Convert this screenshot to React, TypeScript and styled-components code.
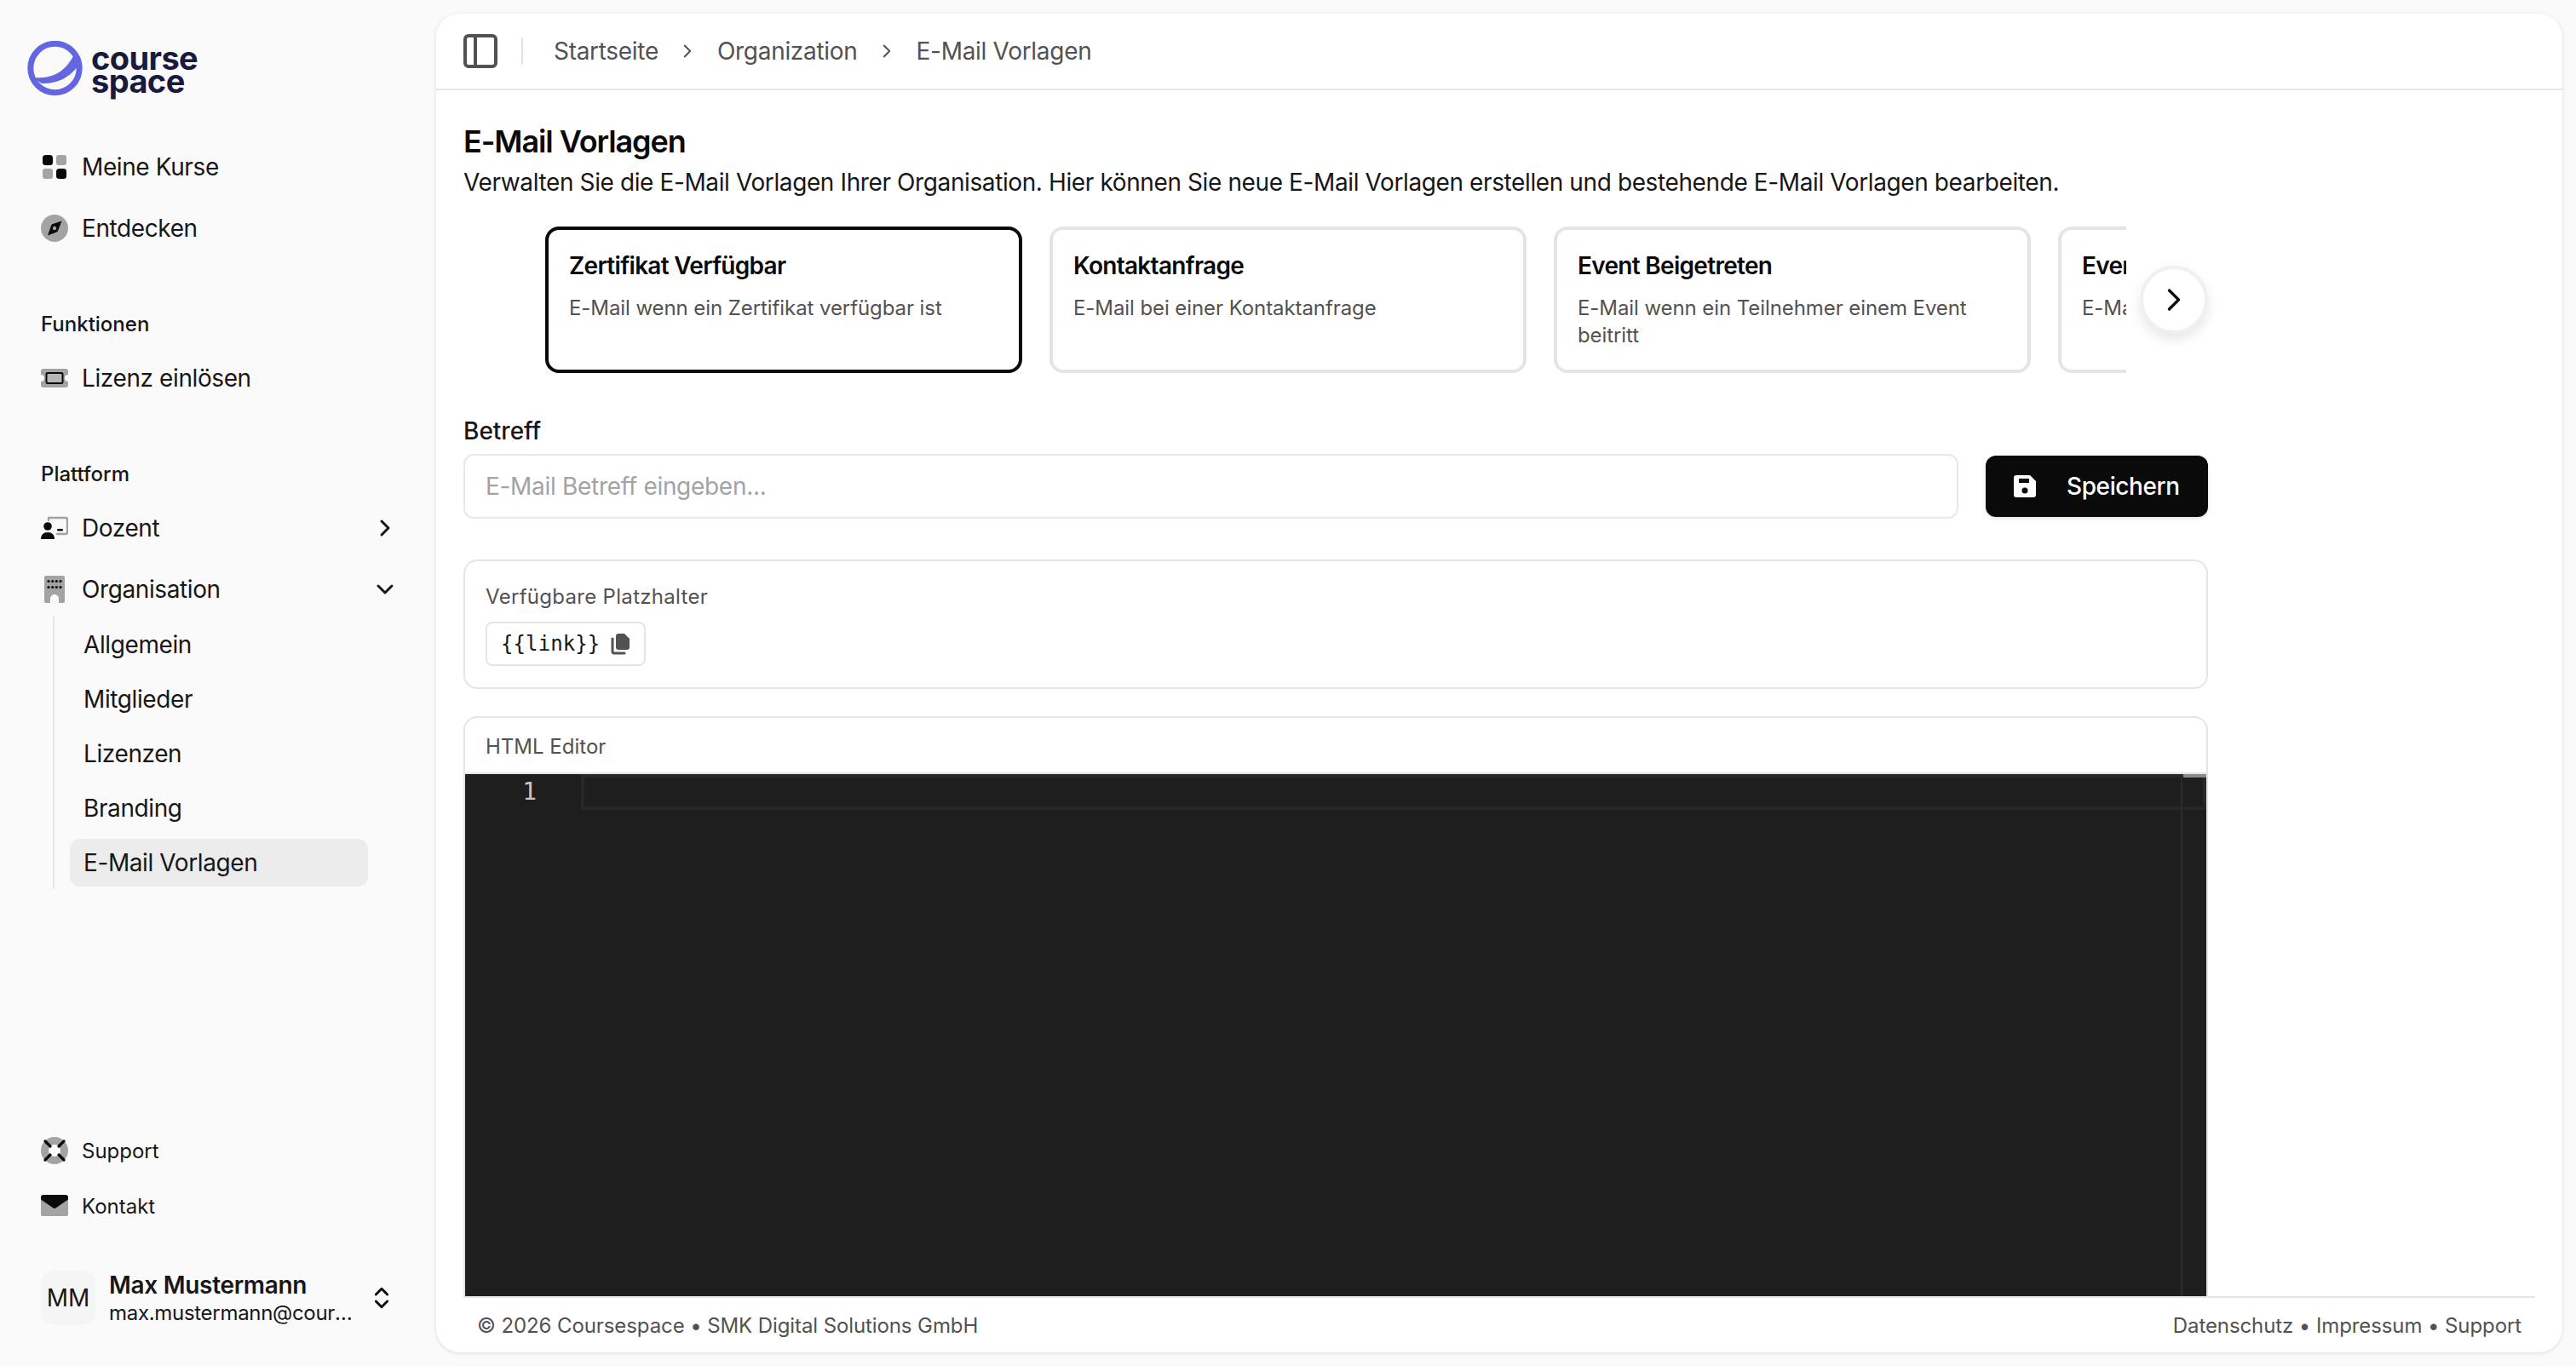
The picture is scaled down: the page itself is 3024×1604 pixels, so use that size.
import React from "react";
import styled, { createGlobalStyle } from "styled-components";
import { ChevronDown, ChevronRight, ChevronsUpDown, PanelLeft } from "lucide-react";

const Global = createGlobalStyle`
  * { box-sizing: border-box; }
  html, body { margin: 0; padding: 0; height: 100%; }
  body { background: #fafafa; color: #0a0a0a; font-family: Inter, "Liberation Sans", sans-serif; overflow: hidden; }
  #root { height: 100%; }
`;

const Shell = styled.div`
  display: flex;
  height: 100vh;
`;

const Sidebar = styled.aside`
  width: 512px;
  flex: none;
  display: flex;
  flex-direction: column;
  padding: 48px 32px 48px;
`;

const Brand = styled.div`
  display: flex;
  align-items: center;
  gap: 9px;
  height: 66px;
  margin-bottom: 50px;
`;

const BrandWord = styled.div`
  font-family: Inter, sans-serif;
  font-weight: 700;
  font-size: 38px;
  line-height: 27px;
  letter-spacing: -0.6px;
  color: #1a1a3d;
  padding-top: 2px;
`;

const Group = styled.nav`
  display: flex;
  flex-direction: column;
  gap: 8px;
  margin-bottom: 64px;
`;

const GroupLabel = styled.div`
  height: 32px;
  line-height: 34px;
  padding-left: 16px;
  margin-bottom: 8px;
  font-size: 24px;
  font-weight: 500;
  color: #171717;
`;

const NavItem = styled.div<{ $small?: boolean }>`
  display: flex;
  align-items: center;
  gap: 16px;
  height: ${(p) => (p.$small ? "56px" : "64px")};
  padding: 0 16px;
  font-size: ${(p) => (p.$small ? "24px" : "28px")};
  letter-spacing: ${(p) => (p.$small ? "0" : "-0.4px")};
  color: #171717;
  svg.tail { margin-left: auto; margin-right: -4px; }
`;

const IconSlot = styled.svg`
  width: 32px;
  height: 32px;
  flex: none;
`;

const SubList = styled.div`
  margin: -8px 0 0 30px;
  padding: 5px 0 3px 18px;
  border-left: 2px solid #e5e5e5;
  display: flex;
  flex-direction: column;
  gap: 8px;
`;

const SubItem = styled.div<{ $active?: boolean }>`
  width: 350px;
  height: 56px;
  line-height: 56px;
  padding-left: 16px;
  font-size: 28px;
  letter-spacing: -0.4px;
  color: #171717;
  border-radius: 12px;
  background: ${(p) => (p.$active ? "#ececec" : "transparent")};
`;

const SidebarBottom = styled.div`
  margin-top: auto;
  display: flex;
  flex-direction: column;
  gap: 9px;
`;

const UserRow = styled.div`
  display: flex;
  align-items: center;
  gap: 16px;
  margin: 39px 0 0 16px;
  height: 64px;
`;

const Avatar = styled.div`
  width: 64px;
  height: 64px;
  flex: none;
  border-radius: 16px;
  background: #f5f5f5;
  display: flex;
  align-items: center;
  justify-content: center;
  font-size: 28px;
  color: #171717;
`;

const UserText = styled.div`
  width: 288px;
  min-width: 0;
  padding-top: 2px;
`;

const UserName = styled.div`
  font-size: 28px;
  font-weight: 600;
  line-height: 34px;
  letter-spacing: -0.3px;
  color: #171717;
  white-space: nowrap;
`;

const UserMail = styled.div`
  font-size: 24px;
  line-height: 32px;
  letter-spacing: -0.3px;
  color: #171717;
  white-space: nowrap;
  overflow: hidden;
  text-overflow: ellipsis;
`;

const Panel = styled.main`
  flex: 1;
  min-width: 0;
  margin: 16px 16px 16px 0;
  background: #fff;
  border-radius: 28px;
  box-shadow: 0 1px 5px rgba(0, 0, 0, 0.12);
  display: flex;
  flex-direction: column;
  overflow: hidden;
`;

const Header = styled.header`
  height: 90px;
  flex: none;
  display: flex;
  align-items: center;
  padding-left: 28px;
  border-bottom: 2px solid #e5e5e5;
  svg { flex: none; }
`;

const HeaderDivider = styled.div`
  width: 2px;
  height: 32px;
  background: #e5e5e5;
  margin: 0 36px 0 24px;
`;

const Crumb = styled.span`
  font-size: 28px;
  letter-spacing: -0.3px;
  color: #525252;
`;

const CrumbSep = styled.span`
  display: flex;
  margin: 0 21.5px;
  color: #525252;
`;

const Content = styled.div`
  flex: 1;
  min-height: 0;
  overflow: hidden;
  padding: 40px 32px 0;
  width: 2112px;
`;

const Title = styled.h1`
  margin: 0;
  font-size: 36px;
  line-height: 40px;
  font-weight: 600;
  letter-spacing: -1.1px;
  color: #0a0a0a;
`;

const Description = styled.p`
  margin: 8px 0 32px;
  font-size: 28px;
  line-height: 40px;
  letter-spacing: -0.39px;
  color: #171717;
  white-space: nowrap;
`;

const Carousel = styled.div`
  position: relative;
  padding: 0 96px;
`;

const Track = styled.div`
  display: flex;
  gap: 32px;
  overflow: hidden;
`;

const TemplateCard = styled.div<{ $selected?: boolean }>`
  flex: none;
  width: 560px;
  height: 172px;
  padding: 24px;
  border: 4px solid ${(p) => (p.$selected ? "#0a0a0a" : "#e5e5e5")};
  border-radius: 16px;
  background: #fff;
`;

const CardTitle = styled.div`
  font-size: 28px;
  line-height: 36px;
  font-weight: 600;
  letter-spacing: -0.7px;
  color: #0a0a0a;
  white-space: nowrap;
`;

const CardText = styled.div`
  margin-top: 16px;
  font-size: 24px;
  line-height: 32px;
  letter-spacing: -0.08px;
  color: #525252;
`;

const NextButton = styled.button`
  position: absolute;
  right: 0;
  top: 46px;
  width: 80px;
  height: 80px;
  border-radius: 50%;
  border: 4px solid #f0f0f0;
  background: #fff;
  box-shadow: 0 6px 14px rgba(0, 0, 0, 0.1);
  display: flex;
  align-items: center;
  justify-content: center;
  padding: 0;
  color: #0a0a0a;
`;

const FieldLabel = styled.div`
  margin-top: 48px;
  font-size: 28px;
  line-height: 40px;
  font-weight: 500;
  color: #171717;
`;

const SubjectRow = styled.div`
  margin-top: 7px;
  display: flex;
  align-items: center;
  gap: 32px;
`;

const SubjectInput = styled.input`
  flex: 1;
  min-width: 0;
  height: 76px;
  padding: 0 24px;
  border: 2px solid #e8e8e8;
  border-radius: 12px;
  background: #fff;
  font: 400 28px Inter, sans-serif;
  letter-spacing: -0.3px;
  color: #171717;
  outline: none;
  &::placeholder { color: #a3a3a3; opacity: 1; }
`;

const SaveButton = styled.button`
  flex: none;
  width: 261px;
  height: 72px;
  border: 0;
  border-radius: 12px;
  background: #0a0a0a;
  color: #fff;
  display: flex;
  align-items: center;
  gap: 34px;
  padding: 0 0 0 31px;
  font: 500 28px Inter, sans-serif;
  letter-spacing: -0.4px;
  box-shadow: 0 2px 4px rgba(0, 0, 0, 0.12);
`;

const PlaceholderBox = styled.section`
  margin-top: 48px;
  height: 152px;
  padding: 26px 24px 0;
  border: 2px solid #e5e5e5;
  border-radius: 16px;
`;

const SmallHeading = styled.div`
  font-size: 24px;
  line-height: 32px;
  letter-spacing: 0.3px;
  color: #525252;
`;

const Chip = styled.div`
  display: inline-flex;
  align-items: center;
  gap: 12px;
  height: 52px;
  margin-top: 13px;
  padding: 0 16px;
  border: 2px solid #e5e5e5;
  border-radius: 8px;
  font-family: "DejaVu Sans Mono", monospace;
  font-size: 24px;
  letter-spacing: 0.1px;
  color: #171717;
`;

const EditorCard = styled.section`
  margin-top: 32px;
  height: 1000px;
  border: 2px solid #e5e5e5;
  border-bottom: 0;
  border-radius: 16px 16px 0 0;
  overflow: hidden;
  display: flex;
  flex-direction: column;
`;

const EditorHeading = styled.div`
  flex: none;
  height: 66px;
  padding: 18px 24px 0;
  border-bottom: 2px solid #e5e5e5;
  font-size: 24px;
  line-height: 32px;
  color: #525252;
`;

const EditorBody = styled.div`
  position: relative;
  flex: 1;
  background: #1e1e1e;
  display: flex;
  align-items: flex-start;
`;

const LineNumber = styled.div`
  width: 136px;
  flex: none;
  height: 42px;
  padding-right: 52px;
  text-align: right;
  font-family: "DejaVu Sans Mono", monospace;
  font-size: 28px;
  line-height: 42px;
  color: #c6c6c6;
`;

const CurrentLine = styled.div`
  flex: 1;
  height: 42px;
  border: 4px solid #282828;
`;

const Ruler = styled.div`
  position: absolute;
  top: 0;
  bottom: 0;
  right: 28px;
  width: 2px;
  background: #2b2b2b;
`;

const RulerCursor = styled.div`
  position: absolute;
  top: 0;
  right: 0;
  width: 27px;
  height: 4px;
  background: #8a8a8a;
`;

const Footer = styled.footer`
  flex: none;
  height: 66px;
  margin: 0 32px;
  padding: 0 16px;
  border-top: 2px solid #e5e5e5;
  display: flex;
  align-items: center;
  justify-content: space-between;
  font-size: 24px;
  letter-spacing: -0.1px;
  color: #525252;
  background: #fff;
`;

const gray = "#a3a3a3";
const dark = "#0a0a0a";

const Logo = () => (
  <svg width="66" height="66" viewBox="0 0 66 66" fill="none">
    <circle cx="32.5" cy="32" r="28.7" stroke="#6366e0" strokeWidth="7" />
    <path d="M6 43C20 44 42 44 56 14L60 29C50 42 38 50 17 50Z" fill="#6366e0" />
  </svg>
);

const GridIcon = () => (
  <IconSlot viewBox="0 0 32 32">
    <rect x="2" y="2" width="12" height="12" rx="3.5" fill={dark} />
    <rect x="18" y="2" width="12" height="12" rx="3" fill={gray} />
    <rect x="2" y="18" width="12" height="12" rx="3" fill={gray} />
    <rect x="18" y="18" width="12" height="12" rx="3.5" fill={dark} />
  </IconSlot>
);

const CompassIcon = () => (
  <IconSlot viewBox="0 0 32 32">
    <circle cx="16" cy="16" r="16" fill={gray} />
    <path d="M24.5 7.5L20 19C19.4 20 19 20.4 18 20.8L8 24.5L12 13C12.4 12 13 11.4 14 11Z" fill={dark} />
    <circle cx="16" cy="16" r="2.2" fill={gray} />
  </IconSlot>
);

const TicketIcon = () => (
  <IconSlot viewBox="0 0 32 32">
    <path d="M3 5H29A3 3 0 0 1 32 8V12A4 4 0 0 0 32 20V24A3 3 0 0 1 29 27H3A3 3 0 0 1 0 24V20A4 4 0 0 0 0 12V8A3 3 0 0 1 3 5Z" fill={gray} />
    <rect x="6.5" y="10" width="19" height="12" rx="1.5" fill="#b5b5b5" stroke={dark} strokeWidth="2" />
  </IconSlot>
);

const TeacherIcon = () => (
  <IconSlot viewBox="0 0 32 32">
    <path d="M9 4H29A2 2 0 0 1 31 6V21A2 2 0 0 1 29 23H19" fill="none" stroke={gray} strokeWidth="2.4" strokeLinecap="round" />
    <path d="M9 4V7" stroke={gray} strokeWidth="2.4" strokeLinecap="round" />
    <rect x="19" y="17" width="7" height="2.6" rx="1.3" fill={dark} />
    <circle cx="8" cy="14" r="4.8" fill={dark} />
    <path d="M0 29C0 24 3 21 8 21C13 21 16 24 16 29Z" fill={dark} />
  </IconSlot>
);

const BuildingIcon = () => (
  <IconSlot viewBox="0 0 32 32">
    <path d="M6 0H26A2 2 0 0 1 28 2V30A2 2 0 0 1 26 32H21V27A5 5 0 0 0 11 27V32H6A2 2 0 0 1 4 30V2A2 2 0 0 1 6 0Z" fill={gray} />
    {[9, 13.7, 18.3, 23].map((x) => (
      <React.Fragment key={x}>
        <circle cx={x} cy="6.5" r="1.6" fill={dark} />
        <circle cx={x} cy="13.5" r="1.6" fill={dark} />
      </React.Fragment>
    ))}
  </IconSlot>
);

const LifebuoyIcon = () => (
  <IconSlot viewBox="0 0 32 32">
    <circle cx="16" cy="16" r="16" fill={gray} />
    <circle cx="16" cy="16" r="7" fill="#fff" />
    <path d="M5 5L11 11M27 5L21 11M5 27L11 21M27 27L21 21" stroke={dark} strokeWidth="3.2" strokeLinecap="round" />
  </IconSlot>
);

const MailIcon = () => (
  <IconSlot viewBox="0 0 32 32">
    <path d="M0 8L16 18L32 8V26A2 2 0 0 1 30 28H2A2 2 0 0 1 0 26Z" fill={gray} />
    <path d="M3 3H29A3 3 0 0 1 32 6V8.5L17.5 18.5A3 3 0 0 1 14.5 18.5L0 8.5V6A3 3 0 0 1 3 3Z" fill={dark} />
  </IconSlot>
);

const SaveIcon = () => (
  <svg width="30" height="30" viewBox="0 0 30 30">
    <path
      fillRule="evenodd"
      fill="#fff"
      d="M5 2H21L28 9V25A3 3 0 0 1 25 28H5A3 3 0 0 1 2 25V5A3 3 0 0 1 5 2ZM8 6V11H20V6ZM15 16.5A3.5 3.5 0 1 0 15 23.5A3.5 3.5 0 1 0 15 16.5Z"
    />
  </svg>
);

const CopyIcon = () => (
  <svg width="24" height="26" viewBox="0 0 24 26">
    <path d="M3 7V22A2 2 0 0 0 5 24H17" fill="none" stroke="#525252" strokeWidth="3" strokeLinecap="round" />
    <path d="M10 1H17L23 7V17A3 3 0 0 1 20 20H10A3 3 0 0 1 7 17V4A3 3 0 0 1 10 1Z" fill="#525252" />
  </svg>
);

const cards = [
  { title: "Zertifikat Verfügbar", text: "E-Mail wenn ein Zertifikat verfügbar ist", selected: true },
  { title: "Kontaktanfrage", text: "E-Mail bei einer Kontaktanfrage" },
  { title: "Event Beigetreten", text: "E-Mail wenn ein Teilnehmer einem Event beitritt" },
  { title: "Event Erinnerung", text: "E-Mail zur Erinnerung an ein Event" },
];

export default function App() {
  return (
    <Shell>
      <Global />
      <Sidebar>
        <Brand>
          <Logo />
          <BrandWord>
            course
            <br />
            space
          </BrandWord>
        </Brand>
        <Group>
          <NavItem><GridIcon />Meine Kurse</NavItem>
          <NavItem><CompassIcon />Entdecken</NavItem>
        </Group>
        <Group>
          <GroupLabel>Funktionen</GroupLabel>
          <NavItem><TicketIcon />Lizenz einlösen</NavItem>
        </Group>
        <Group>
          <GroupLabel>Plattform</GroupLabel>
          <NavItem>
            <TeacherIcon />Dozent
            <ChevronRight className="tail" size={32} strokeWidth={2.2} />
          </NavItem>
          <NavItem>
            <BuildingIcon />Organisation
            <ChevronDown className="tail" size={32} strokeWidth={2.2} />
          </NavItem>
          <SubList>
            <SubItem>Allgemein</SubItem>
            <SubItem>Mitglieder</SubItem>
            <SubItem>Lizenzen</SubItem>
            <SubItem>Branding</SubItem>
            <SubItem $active>E-Mail Vorlagen</SubItem>
          </SubList>
        </Group>
        <SidebarBottom>
          <NavItem $small><LifebuoyIcon />Support</NavItem>
          <NavItem $small><MailIcon />Kontakt</NavItem>
          <UserRow>
            <Avatar>MM</Avatar>
            <UserText>
              <UserName>Max Mustermann</UserName>
              <UserMail>max.mustermann@coursespace.de</UserMail>
            </UserText>
            <ChevronsUpDown size={32} strokeWidth={2.2} />
          </UserRow>
        </SidebarBottom>
      </Sidebar>
      <Panel>
        <Header>
          <PanelLeft size={48} strokeWidth={2} color="#525252" />
          <HeaderDivider />
          <Crumb>Startseite</Crumb>
          <CrumbSep><ChevronRight size={26} strokeWidth={1.8} /></CrumbSep>
          <Crumb>Organization</Crumb>
          <CrumbSep><ChevronRight size={26} strokeWidth={1.8} /></CrumbSep>
          <Crumb>E-Mail Vorlagen</Crumb>
        </Header>
        <Content>
          <Title>E-Mail Vorlagen</Title>
          <Description>
            Verwalten Sie die E-Mail Vorlagen Ihrer Organisation. Hier können Sie neue E-Mail Vorlagen erstellen und bestehende E-Mail Vorlagen bearbeiten.
          </Description>
          <Carousel>
            <Track>
              {cards.map((c) => (
                <TemplateCard key={c.title} $selected={c.selected}>
                  <CardTitle>{c.title}</CardTitle>
                  <CardText>{c.text}</CardText>
                </TemplateCard>
              ))}
            </Track>
            <NextButton aria-label="Weiter"><ChevronRight size={44} strokeWidth={1.8} /></NextButton>
          </Carousel>
          <FieldLabel>Betreff</FieldLabel>
          <SubjectRow>
            <SubjectInput placeholder="E-Mail Betreff eingeben..." />
            <SaveButton><SaveIcon />Speichern</SaveButton>
          </SubjectRow>
          <PlaceholderBox>
            <SmallHeading>Verfügbare Platzhalter</SmallHeading>
            <Chip>{"{{link}}"}<CopyIcon /></Chip>
          </PlaceholderBox>
          <EditorCard>
            <EditorHeading>HTML Editor</EditorHeading>
            <EditorBody>
              <LineNumber>1</LineNumber>
              <CurrentLine />
              <Ruler />
              <RulerCursor />
            </EditorBody>
          </EditorCard>
        </Content>
        <Footer>
          <span>© 2026 Coursespace • SMK Digital Solutions GmbH</span>
          <span>Datenschutz • Impressum • Support</span>
        </Footer>
      </Panel>
    </Shell>
  );
}
